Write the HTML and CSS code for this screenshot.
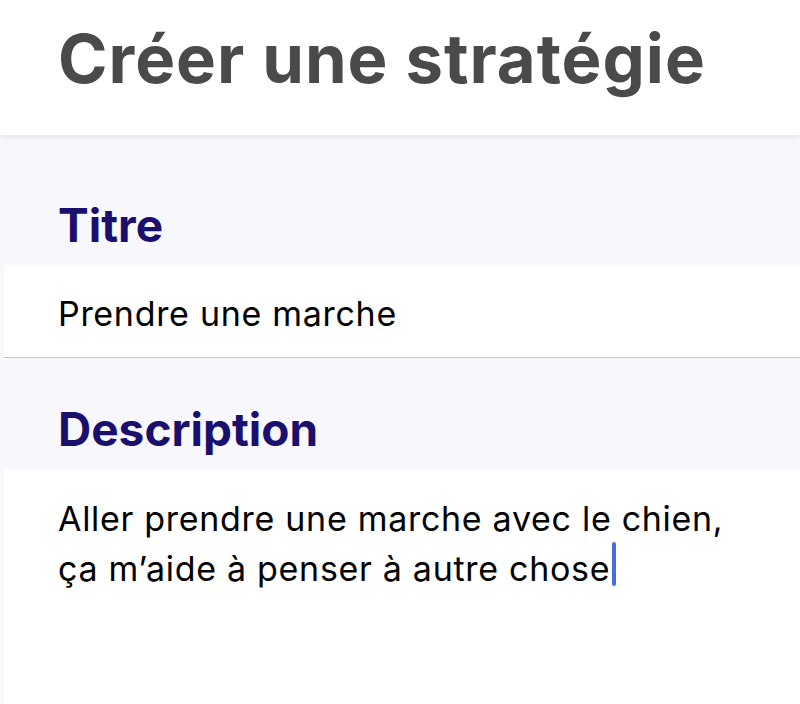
FILE: index.html
```html
<!DOCTYPE html>
<html lang="fr">
<head>
  <meta charset="UTF-8"/>
  <meta name="viewport" content="width=device-width, initial-scale=1.0"/>
  <title>Créer une stratégie</title>
  <link rel="stylesheet" href="styles.css">
</head>
<body>
  <header class="nav-bar">
    <h1>Créer une stratégie</h1>
  </header>

  <main class="form">
    <label class="field-label" for="title">Titre</label>
    <div class="field single">
      <span id="title">Prendre une marche</span>
    </div>

    <label class="field-label" for="description">Description</label>
    <div class="field multi">
      <p id="description">Aller prendre une marche avec le chien,<br>ça m’aide à penser à autre chose<span class="caret"></span></p>
    </div>
  </main>
</body>
</html>
```

FILE: styles.css
```css
body {
  font-family: Inter, "Noto Sans", sans-serif;
  background-color: #f8f8fc;
  margin: 0;
  padding: 0;
  height: 704px;
  overflow: hidden;
}

.nav-bar {
  background-color: #fff;
  height: 135px;
  padding: 0 58px;
  box-sizing: border-box;
  box-shadow: 0 2px 6px rgba(0, 0, 0, 0.08);
  position: relative;
}

.nav-bar h1 {
  margin: 0;
  padding-top: 18px;
  font-size: 67px;
  font-weight: 700;
  color: #4a4a4a;
  letter-spacing: 1px;
  line-height: normal;
}

.form {
  display: flex;
  flex-direction: column;
  padding-top: 19px;
}

.field-label {
  display: block;
  padding: 43px 58px 12px;
  font-size: 46px;
  font-weight: 700;
  color: #1b0f6e;
  line-height: normal;
}

.field {
  background-color: #fff;
  color: #000;
  font-size: 34px;
  letter-spacing: 0.7px;
  margin-left: 4px;
  padding: 0 0 0 54px;
}

.field.single {
  height: 93px;
  box-sizing: border-box;
  padding-top: 28px;
  line-height: normal;
  border-bottom: 1px solid #c8c8cc;
}

.field.multi {
  min-height: 240px;
}

.field.multi p {
  margin: 0;
  padding-top: 26px;
  line-height: 47px;
}

.caret {
  display: inline-block;
  width: 4px;
  height: 44px;
  margin-left: 2px;
  vertical-align: -5px;
  background-color: #4a6ee0;
  border-radius: 2px;
}
```
